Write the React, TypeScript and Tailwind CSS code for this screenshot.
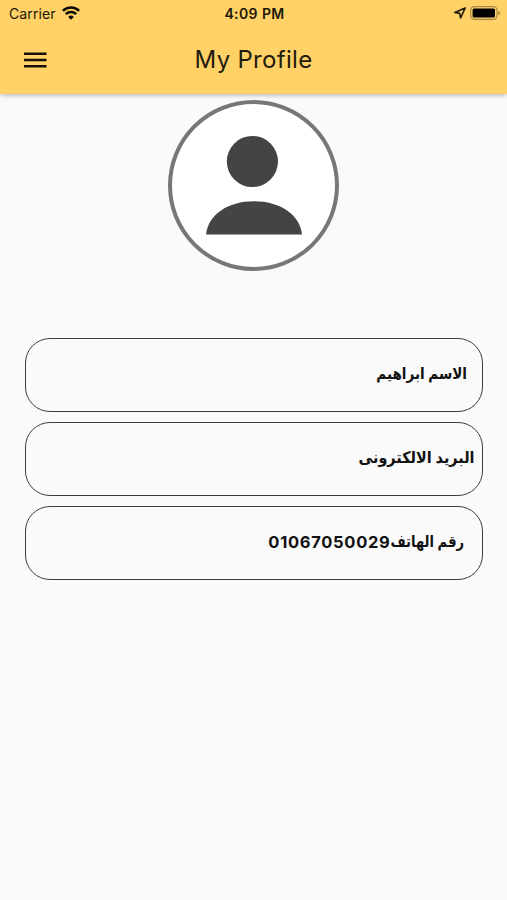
const fields = [
  { id: 'name', label: 'الاسم ابراهيم', value: '', pad: 'pr-[15px]', fit: 'w-[90px] scale-x-[0.94]' },
  { id: 'email', label: 'البريد الالكترونى', value: '', pad: 'pr-[7px]', fit: 'w-[116px] scale-x-100' },
  { id: 'phone', label: 'رقم الهاتف', value: '01067050029', pad: 'pr-[18px]', fit: 'w-[73px] scale-x-[0.91]' },
];

const WifiIcon = () => (
  <svg className="mb-px" width="18" height="14" viewBox="0 0 18 14" fill="none" stroke="#0c0a05" strokeWidth="2.5">
    <path d="M0.9 4.9a11.6 11.6 0 0 1 16.2 0" />
    <path d="M3.8 8.1a7.5 7.5 0 0 1 10.4 0" />
    <path d="M9 13.8 6.1 10.9a4.2 4.2 0 0 1 5.8 0z" fill="#0c0a05" stroke="none" />
  </svg>
);

const LocationIcon = () => (
  <svg width="12" height="12" viewBox="0 0 12 12" fill="none" stroke="#1c1708" strokeWidth="1.6" strokeLinejoin="round">
    <path d="M11.2 1 .8 5.5l5 .9.8 4.6z" />
  </svg>
);

const BatteryIcon = () => (
  <svg width="31" height="14" viewBox="0 0 31 14">
    <rect x="0.7" y="0.7" width="26.3" height="12.6" rx="3.6" fill="none" stroke="#a78b48" strokeWidth="1.2" />
    <rect x="2.6" y="2.6" width="22.4" height="8.8" rx="1.5" fill="#000" />
    <path d="M28.4 4.8c2.2.7 2.2 3.7 0 4.4z" fill="#a78b48" />
  </svg>
);

const StatusBar = () => (
  <div className="grid h-[27px] grid-cols-3 items-center pl-[9px] pr-[6px] text-[14px] leading-none text-[#1c1708]">
    <div className="flex items-center gap-[6px]">
      <span className="tracking-[0.1px]">Carrier</span>
      <WifiIcon />
    </div>
    <span className="pr-px pt-px text-center text-[14px] font-semibold tracking-[0.4px]">4:09 PM</span>
    <div className="flex items-center justify-end gap-[4px] pb-px">
      <LocationIcon />
      <BatteryIcon />
    </div>
  </div>
);

const Avatar = () => (
  <div className="flex size-[171px] items-center justify-center rounded-full border-4 border-[#777] bg-white">
    <svg width="163" height="163" viewBox="0 0 163 163" fill="#444">
      <circle cx="80.4" cy="57.5" r="25.6" />
      <path d="M34 130.5c2-20 22-33.3 48-33.3s46 13.3 48 33.3z" />
    </svg>
  </div>
);

export default function App() {
  return (
    <div className="flex h-[900px] w-[507px] flex-col bg-[#fafafa] font-['Inter','Liberation_Sans',sans-serif]">
      <header className="h-[94px] bg-[#ffd166] shadow-[0_1px_5px_rgba(0,0,0,0.3)]">
        <StatusBar />
        <div className="grid h-[66px] grid-cols-[60px_1fr_60px] items-center">
          <button className="pl-[24px]" aria-label="Menu">
            <svg width="23" height="16" viewBox="0 0 23 16" fill="#15110a">
              <path d="M0 0.4h22.5v2.5H0zM0 6.7h22.5v2.5H0zM0 12.9h22.5v2.5H0z" />
            </svg>
          </button>
          <h1 className="text-center text-[24px] font-normal tracking-[0.3px] text-[#221c0e]">My Profile</h1>
        </div>
      </header>

      <main className="flex flex-col items-center pt-[6px]">
        <Avatar />
        <div className="mt-[67px] flex w-[458px] flex-col gap-[10.5px]">
          {fields.map(({ id, label, value, pad, fit }) => (
            <div
              key={id}
              dir="rtl"
              className={`flex h-[73.7px] items-center rounded-[25px] border-[1.4px] border-[#3c3c3c] pb-[2px] font-bold text-[#111] ${pad}`}
            >
              <span
                className={`shrink-0 origin-right whitespace-nowrap font-['DejaVu_Sans_Condensed','DejaVu_Sans',sans-serif] text-[16px] [word-spacing:-1px] ${fit}`}
              >
                {label}
              </span>
              {value && <span className="text-[16.5px] tracking-[0.7px]">{value}</span>}
            </div>
          ))}
        </div>
      </main>
    </div>
  );
}
